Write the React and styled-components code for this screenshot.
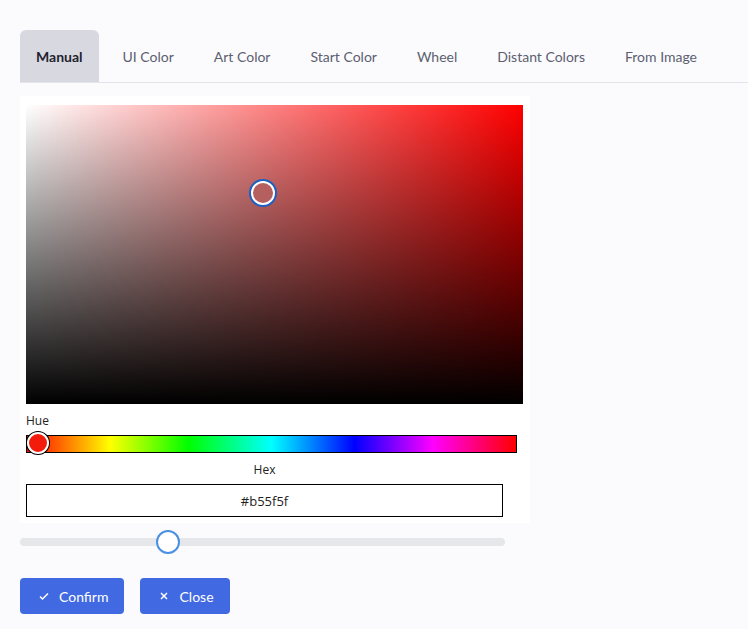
import React from "react";
import styled, { createGlobalStyle } from "styled-components";

const G = createGlobalStyle`
  body { margin: 0; background: #fbfbfd; font-family: Lato, "Open Sans", sans-serif; }
`;
const Page = styled.div`padding: 30px 0 0 20px; width: 728px;`;
const Tabs = styled.div`display: flex; border-bottom: 1px solid #e4e5ea; height: 52px;`;
const Tab = styled.div`
  padding: 0 16px; height: 52px; display: flex; align-items: center; font-size: 14px;
  color: ${p => (p.$active ? "#1f2330" : "#5b6070")}; font-weight: ${p => (p.$active ? 700 : 400)};
  background: ${p => (p.$active ? "#d8d9e0" : "transparent")}; border-radius: 6px 6px 0 0;
  margin-right: ${p => (p.$active ? "8px" : "8px")};
`;
const Panel = styled.div`
  margin-top: 13px; width: 510px; background: #fff; padding: 9px 6px 6px 6px; box-sizing: border-box;
  font-family: "Open Sans", sans-serif;
`;
const Sat = styled.div`
  position: relative; width: 497px; height: 299px;
  background: linear-gradient(to top, #000, rgba(0,0,0,0)), linear-gradient(to right, #fff, #f00);
`;
const Cursor = styled.div`
  position: absolute; left: 225px; top: 76px; width: 20px; height: 20px; border-radius: 50%;
  background: #b55f5f; border: 2px solid #fff; box-shadow: 0 0 0 2px #1f5fbf;
`;
const Label = styled.div`font-size: 12px; color: #222; margin: 8px 0 6px; text-align: ${p => p.$c ? "center" : "left"}; width: ${p => p.$c ? "477px" : "auto"};`;
const Hue = styled.div`
  position: relative; width: 489px; height: 16px; border: 1px solid #000;
  background: linear-gradient(to right,#f00,#ff0 17%,#0f0 33%,#0ff 50%,#00f 67%,#f0f 83%,#f00);
`;
const HueThumb = styled.div`
  position: absolute; left: 0; top: -4px; width: 18px; height: 18px; border-radius: 50%;
  background: #f21b0c; border: 2px solid #fff; box-shadow: 0 0 0 1px #000;
`;
const Input = styled.div`
  width: 475px; height: 31px; border: 1px solid #000; display: flex; align-items: center; justify-content: center;
  font-size: 13px; color: #222;
`;
const Slider = styled.div`position: relative; width: 485px; height: 8px; background: #e5e7eb; border-radius: 4px; margin-top: 15px;`;
const Thumb = styled.div`
  position: absolute; left: 136px; top: -8px; width: 20px; height: 20px; border-radius: 50%;
  background: #fff; border: 2px solid #4a90e2;
`;
const Buttons = styled.div`display: flex; gap: 16px; margin-top: 32px;`;
const Btn = styled.button`
  height: 36px; padding: 0 16px 0 18px; border: none; border-radius: 4px; background: #4169e1; color: #fff;
  font-family: Lato, sans-serif; font-size: 14px; display: flex; align-items: center; gap: 9px;
`;

export default function App() {
  const tabs = ["Manual", "UI Color", "Art Color", "Start Color", "Wheel", "Distant Colors", "From Image"];
  return (
    <Page>
      <G />
      <Tabs>{tabs.map((t, i) => <Tab key={t} $active={i === 0}>{t}</Tab>)}</Tabs>
      <Panel>
        <Sat><Cursor /></Sat>
        <Label>Hue</Label>
        <Hue><HueThumb /></Hue>
        <Label $c>Hex</Label>
        <Input>#b55f5f</Input>
      </Panel>
      <Slider><Thumb /></Slider>
      <Buttons>
        <Btn><svg width="12" height="12" viewBox="0 0 12 12"><path d="M2 6.5l2.5 2.5L10 3.5" stroke="#fff" strokeWidth="1.5" fill="none"/></svg>Confirm</Btn>
        <Btn><svg width="12" height="12" viewBox="0 0 12 12"><path d="M3 3l6 6M9 3l-6 6" stroke="#fff" strokeWidth="1.5"/></svg>Close</Btn>
      </Buttons>
    </Page>
  );
}
